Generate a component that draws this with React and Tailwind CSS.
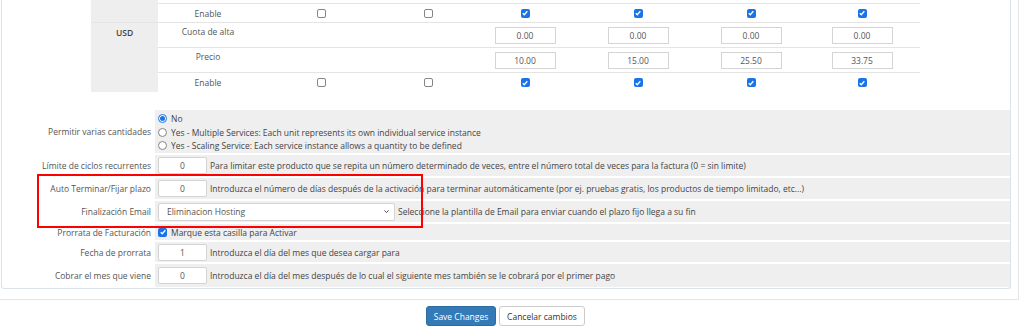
import React from "react";

const colW = "grid grid-cols-[100px_126px_88px_106px_120px_106px_116px]";

const Check = ({ on }) =>
    on ? (
        <span className="inline-flex h-[9px] w-[9px] items-center justify-center rounded-[2px] bg-[#1a73e8]">
            <svg viewBox="0 0 10 10" className="h-[8px] w-[8px]">
                <path d="M2.2 5.3l1.9 1.9 3.8-4.3" fill="none" stroke="#fff" strokeWidth="1.7" />
            </svg>
        </span>
    ) : (
        <span className="inline-block h-[9px] w-[9px] rounded-[2px] border border-[#858585] bg-white" />
    );

const Radio = ({ on }) =>
    on ? (
        <span className="inline-flex h-[9px] w-[9px] items-center justify-center rounded-full border border-[#1a73e8] bg-white">
            <span className="h-[5px] w-[5px] rounded-full bg-[#1a73e8]" />
        </span>
    ) : (
        <span className="inline-block h-[9px] w-[9px] rounded-full border border-[#858585] bg-white" />
    );

const Price = ({ v }) => (
    <div className="flex h-[17px] w-[61px] items-center justify-center border border-[#d4d4d4] bg-white text-[#555]">
        {v}
    </div>
);

const EnableRow = ({ h }) => (
    <div className={`${colW} ${h} items-center border-t border-[#e4e4e4]`}>
        <div className="text-center">Enable</div>
        {[false, false, true, true, true, true].map((c, i) => (
            <div key={i} className="flex justify-center">
                <Check on={c} />
            </div>
        ))}
    </div>
);

const NumBox = ({ v }) => (
    <div className="flex h-[17px] w-[49px] shrink-0 items-center justify-center rounded-[2px] border border-[#d4d4d4] bg-white text-[#555]">
        {v}
    </div>
);

const Row = ({ label, h, children }) => (
    <div className={`flex gap-[2px] ${h}`}>
        <div className="flex w-[151px] shrink-0 items-center justify-end pr-[2px] text-[#555]">{label}</div>
        <div className="flex flex-1 items-center bg-[#efefef] pl-[3px] text-[#444]">{children}</div>
    </div>
);

export default function App() {
    return (
        <div className="relative h-[333px] w-[1024px] overflow-hidden bg-white font-['Open_Sans',sans-serif] text-[8.5px] leading-[11px] text-[#555]">
            <div className="w-[1019px] border-r border-b border-[#e6e6e6] pb-[10px]">
                <div className="ml-[1px] w-[1010px] rounded-b-[3px] border border-t-0 border-[#dce3e8] pb-[1px]">
                    {/* pricing table */}
                    <div className="ml-[89px] w-[829px]">
                        <div className="flex">
                            <div className="w-[67px] bg-[#eeeeee]" />
                            <div className="w-[762px]">
                                <div className="h-[3px]" />
                                <EnableRow h="h-[19px]" />
                            </div>
                        </div>
                        <div className="flex border-t border-[#e4e4e4]">
                            <div className="w-[67px] bg-[#eeeeee] pt-[4px] text-center font-semibold text-[#444]">USD</div>
                            <div className="w-[762px]">
                                <div className={`${colW} h-[24px] items-center`}>
                                    <div className="self-start pt-[3px] text-center">Cuota de alta</div>
                                    <div />
                                    <div />
                                    {["0.00", "0.00", "0.00", "0.00"].map((v, i) => (
                                        <div key={i} className="flex justify-center">
                                            <Price v={v} />
                                        </div>
                                    ))}
                                </div>
                                <div className={`${colW} h-[25px] items-center border-t border-[#e4e4e4]`}>
                                    <div className="self-start pt-[3px] text-center">Precio</div>
                                    <div />
                                    <div />
                                    {["10.00", "15.00", "25.50", "33.75"].map((v, i) => (
                                        <div key={i} className="flex justify-center">
                                            <Price v={v} />
                                        </div>
                                    ))}
                                </div>
                                <EnableRow h="h-[20px]" />
                            </div>
                        </div>
                    </div>

                    {/* options */}
                    <div className="mt-[18px] flex flex-col gap-[2px]">
                        <Row label="Permitir varias cantidades" h="h-[43px]">
                            <div className="flex flex-col pt-[1px]">
                                <div className="flex h-[13.5px] items-center gap-[4px]">
                                    <Radio on /> No
                                </div>
                                <div className="flex h-[13.5px] items-center gap-[4px]">
                                    <Radio /> Yes - Multiple Services: Each unit represents its own individual service instance
                                </div>
                                <div className="flex h-[13.5px] items-center gap-[4px]">
                                    <Radio /> Yes - Scaling Service: Each service instance allows a quantity to be defined
                                </div>
                            </div>
                        </Row>
                        <Row label="Límite de ciclos recurrentes" h="h-[21px]">
                            <NumBox v="0" />
                            <span className="ml-[3px]">
                                Para limitar este producto que se repita un número determinado de veces, entre el número total de veces para la factura (0 = sin limite)
                            </span>
                        </Row>
                        <Row label="Auto Terminar/Fijar plazo" h="h-[21px]">
                            <NumBox v="0" />
                            <span className="ml-[3px]">
                                Introduzca el número de días después de la activación para terminar automáticamente (por ej. pruebas gratis, los productos de tiempo limitado, etc...)
                            </span>
                        </Row>
                        <Row label="Finalización Email" h="h-[21px]">
                            <div className="flex h-[18px] w-[237px] shrink-0 items-center justify-between rounded-[2px] border border-[#d4d4d4] bg-white pr-[4px] pl-[8px] text-[#555]">
                                <span>Eliminacion Hosting</span>
                                <svg viewBox="0 0 10 10" className="h-[7px] w-[7px]">
                                    <path d="M2 3.5l3 3 3-3" fill="none" stroke="#444" strokeWidth="1.4" />
                                </svg>
                            </div>
                            <span className="ml-[3px]">
                                Seleccione la plantilla de Email para enviar cuando el plazo fijo llega a su fin
                            </span>
                        </Row>
                        <Row label="Prorrata de Facturación" h="h-[16px]">
                            <Check on />
                            <span className="ml-[4px]">Marque esta casilla para Activar</span>
                        </Row>
                        <Row label="Fecha de prorrata" h="h-[20px]">
                            <NumBox v="1" />
                            <span className="ml-[3px]">Introduzca el día del mes que desea cargar para</span>
                        </Row>
                        <Row label="Cobrar el mes que viene" h="h-[23px]">
                            <NumBox v="0" />
                            <span className="ml-[3px]">
                                Introduzca el día del mes después de lo cual el siguiente mes también se le cobrará por el primer pago
                            </span>
                        </Row>
                    </div>
                </div>
            </div>

            <div className="mt-[6px] flex justify-center gap-[3px] pr-[13px]">
                <button className="h-[20px] w-[70px] rounded-[3px] border border-[#2e6da4] bg-[#337ab7] text-white">
                    Save Changes
                </button>
                <button className="h-[20px] w-[86px] rounded-[3px] border border-[#cccccc] bg-white text-[#333]">
                    Cancelar cambios
                </button>
            </div>

            <div className="absolute top-[174px] left-[37px] h-[54px] w-[386px] border-2 border-[#f00]" />
        </div>
    );
}
